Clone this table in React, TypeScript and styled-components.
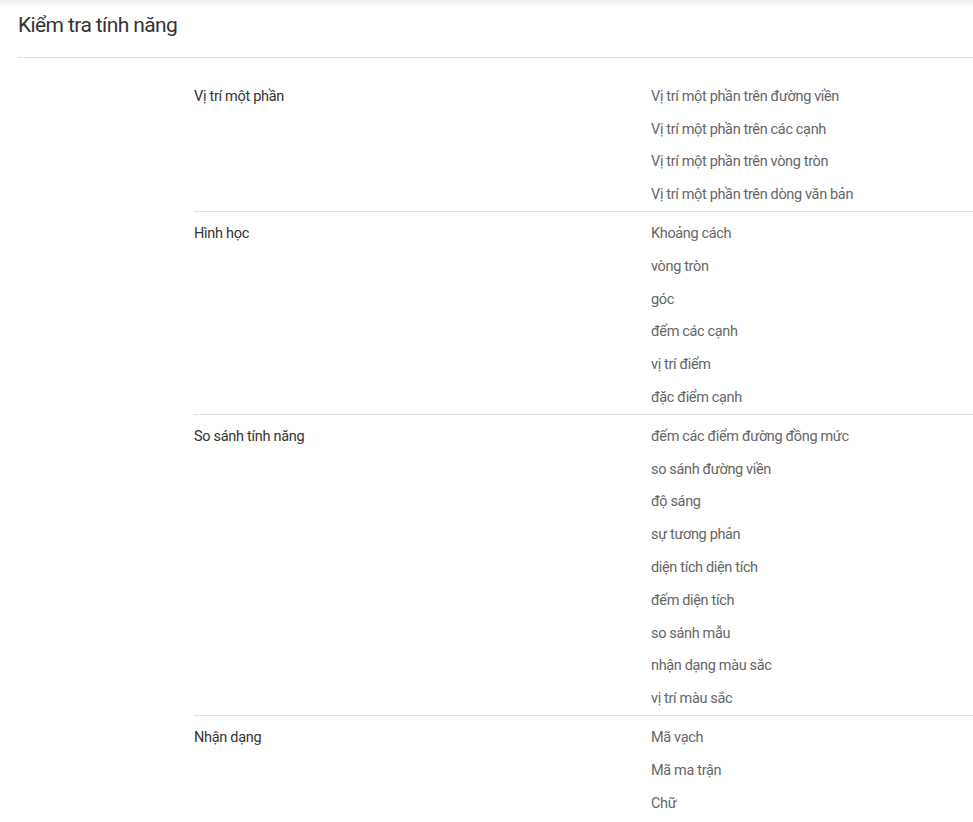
import styled, { createGlobalStyle } from "styled-components";

const GlobalStyle = createGlobalStyle`
  html, body {
    margin: 0;
    padding: 0;
    background: #fff;
    font-family: Roboto, "Liberation Sans", sans-serif;
  }
`;

const Page = styled.div`
  position: relative;
  min-height: 822px;
  overflow: hidden;
`;

const TopShade = styled.div`
  height: 8px;
  margin-bottom: -8px;
  background: linear-gradient(rgba(0, 0, 0, 0.07), rgba(0, 0, 0, 0));
`;

const Content = styled.div`
  padding-left: 18px;
`;

const Title = styled.h1`
  margin: 0;
  height: 58px;
  display: flex;
  align-items: center;
  padding-bottom: 8px;
  box-sizing: border-box;
  font-size: 21px;
  font-weight: 400;
  letter-spacing: -0.6px;
  color: #333;
  border-bottom: 1px solid #e2e2e2;
`;

const Table = styled.div`
  margin: 17px 0 0 176px;
`;

const Section = styled.div`
  display: grid;
  grid-template-columns: 457px 1fr;
  padding-top: 5px;
  border-bottom: 1px solid #e2e2e2;

  &:last-child {
    border-bottom: none;
  }
`;

const Label = styled.div`
  height: 32.8px;
  display: flex;
  align-items: center;
  font-size: 14.5px;
  letter-spacing: -0.3px;
  color: #333;
`;

const Items = styled.div`
  display: flex;
  flex-direction: column;
`;

const Item = styled.div`
  height: 32.8px;
  display: flex;
  align-items: center;
  font-size: 14.5px;
  letter-spacing: -0.35px;
  color: #666;
`;

const sections: { label: string; items: string[] }[] = [
  {
    label: "Vị trí một phần",
    items: [
      "Vị trí một phần trên đường viền",
      "Vị trí một phần trên các cạnh",
      "Vị trí một phần trên vòng tròn",
      "Vị trí một phần trên dòng văn bản",
    ],
  },
  {
    label: "Hình học",
    items: ["Khoảng cách", "vòng tròn", "góc", "đếm các cạnh", "vị trí điểm", "đặc điểm cạnh"],
  },
  {
    label: "So sánh tính năng",
    items: [
      "đếm các điểm đường đồng mức",
      "so sánh đường viền",
      "độ sáng",
      "sự tương phản",
      "diện tích diện tích",
      "đếm diện tích",
      "so sánh mẫu",
      "nhận dạng màu sắc",
      "vị trí màu sắc",
    ],
  },
  {
    label: "Nhận dạng",
    items: ["Mã vạch", "Mã ma trận", "Chữ"],
  },
];

export default function App() {
  return (
    <Page>
      <GlobalStyle />
      <TopShade />
      <Content>
        <Title>Kiểm tra tính năng</Title>
        <Table>
          {sections.map((s) => (
            <Section key={s.label}>
              <Label>{s.label}</Label>
              <Items>
                {s.items.map((it) => (
                  <Item key={it}>{it}</Item>
                ))}
              </Items>
            </Section>
          ))}
        </Table>
      </Content>
    </Page>
  );
}
